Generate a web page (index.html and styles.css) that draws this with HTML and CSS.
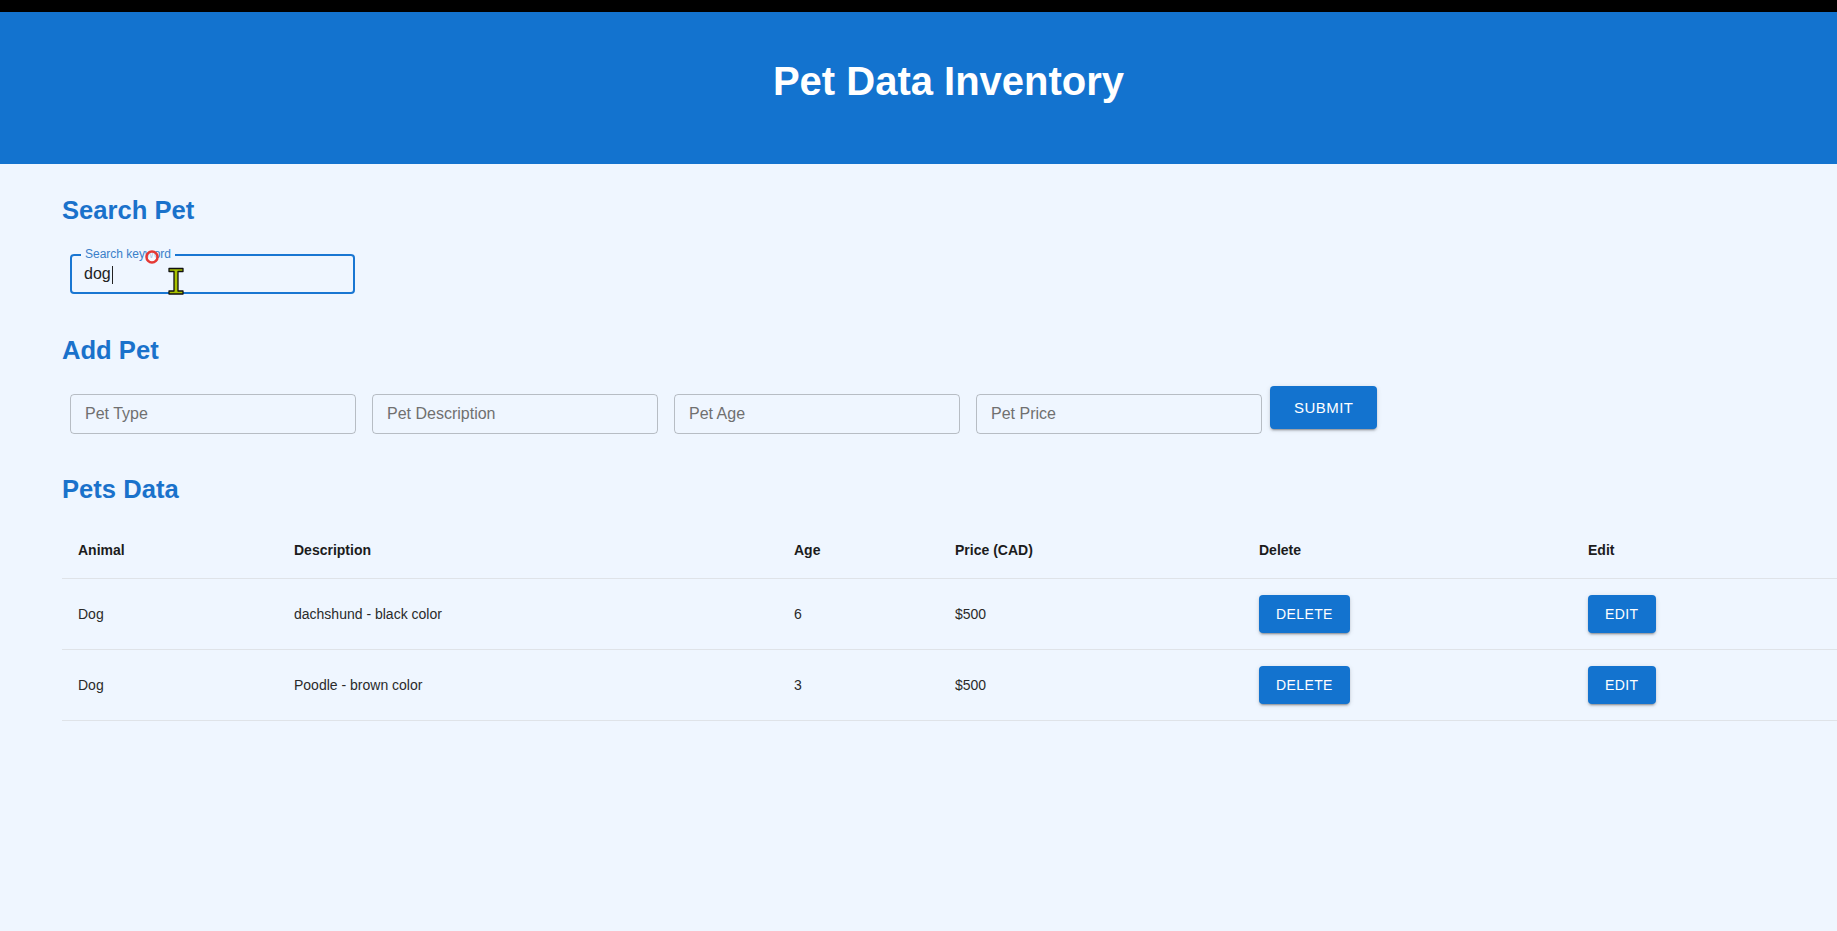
FILE: index.html
```html
<!DOCTYPE html>
<html lang="en">
<head>
<meta charset="utf-8">
<title>Pet Data Inventory</title>
<link rel="stylesheet" href="styles.css">
</head>
<body>
<div class="topbar"></div>
<header class="banner">
  <h1 class="title">Pet Data Inventory</h1>
</header>
<main class="content">
  <h2 class="section-title first">Search Pet</h2>
  <div class="search-row">
    <div class="search-field">
      <span class="float-label">Search keyword</span>
      <input class="search-input" type="text" value="dog">
      <span class="caret"></span>
      <svg class="click-ring" width="16" height="16" viewBox="0 0 16 16"><circle cx="8" cy="8" r="5.5" fill="#fff" fill-opacity="0.6" stroke="#e53935" stroke-width="2.5"/></svg>
      <svg class="ibeam" width="18" height="29" viewBox="0 0 18 29"><path d="M2 1.5h14v3h-5v19.5h5v3h-14v-3h5v-19.5h-5z" fill="#a9c200" stroke="#111" stroke-width="1.3" stroke-linejoin="round"/></svg>
    </div>
  </div>

  <h2 class="section-title">Add Pet</h2>
  <div class="add-row">
    <input class="text-field" type="text" placeholder="Pet Type">
    <input class="text-field" type="text" placeholder="Pet Description">
    <input class="text-field" type="text" placeholder="Pet Age">
    <input class="text-field" type="text" placeholder="Pet Price">
    <button class="btn btn-large" type="button">Submit</button>
  </div>

  <h2 class="section-title data-title">Pets Data</h2>
  <table class="pets-table">
    <colgroup>
      <col class="c-animal">
      <col class="c-desc">
      <col class="c-age">
      <col class="c-price">
      <col class="c-delete">
      <col class="c-edit">
    </colgroup>
    <thead>
      <tr>
        <th>Animal</th>
        <th>Description</th>
        <th>Age</th>
        <th>Price (CAD)</th>
        <th>Delete</th>
        <th>Edit</th>
      </tr>
    </thead>
    <tbody>
      <tr>
        <td>Dog</td>
        <td>dachshund - black color</td>
        <td>6</td>
        <td>$500</td>
        <td><button class="btn" type="button">Delete</button></td>
        <td><button class="btn" type="button">Edit</button></td>
      </tr>
      <tr>
        <td>Dog</td>
        <td>Poodle - brown color</td>
        <td>3</td>
        <td>$500</td>
        <td><button class="btn" type="button">Delete</button></td>
        <td><button class="btn" type="button">Edit</button></td>
      </tr>
    </tbody>
  </table>
</main>
</body>
</html>
```

FILE: styles.css
```css
* {
  box-sizing: border-box;
}

html, body {
  margin: 0;
  padding: 0;
}

body {
  background: #eff6ff;
  font-family: "Liberation Sans", Arial, sans-serif;
  color: rgba(0, 0, 0, 0.87);
}

.topbar {
  height: 12px;
  background: #000;
}

.banner {
  background: #1373cf;
  height: 152px;
  padding: 46px 0 0 60px;
}

.title {
  margin: 0;
  text-align: center;
  color: #fff;
  font-size: 40px;
  line-height: 46px;
  font-weight: 700;
}

.content {
  padding: 0 0 0 62px;
}

.section-title {
  margin: 33px 0 21px;
  font-size: 25.6px;
  line-height: 30px;
  font-weight: 700;
  color: #1a72cb;
}

.section-title.first {
  margin-top: 31px;
}

.section-title.data-title {
  margin: 32px 0 18px;
}

.search-row {
  display: flex;
}

.search-field {
  position: relative;
  margin: 8px;
  width: 285px;
  height: 40px;
  border: 2px solid #1976d2;
  border-radius: 4px;
  display: flex;
  align-items: center;
}

.float-label {
  position: absolute;
  top: -9px;
  left: 9px;
  padding: 0 4px;
  background: #eff6ff;
  font-size: 12px;
  line-height: 14px;
  color: #3a80c9;
}

.search-input {
  border: none;
  outline: none;
  background: transparent;
  font-family: inherit;
  font-size: 16px;
  color: #222;
  padding: 0 0 0 12px;
  width: 39px;
  height: 24px;
  flex: none;
}

.caret {
  width: 1px;
  height: 18px;
  background: #222;
  margin-left: 1px;
  margin-top: 2px;
}

.click-ring {
  position: absolute;
  left: 72px;
  top: -7px;
}

.ibeam {
  position: absolute;
  left: 95px;
  top: 11px;
}

.add-row {
  display: flex;
  align-items: flex-start;
}

.text-field {
  margin: 8px;
  width: 286px;
  height: 40px;
  border: 1px solid rgba(0, 0, 0, 0.23);
  border-radius: 4px;
  background: transparent;
  font-family: inherit;
  font-size: 16px;
  padding: 0 14px;
  color: #222;
  outline: none;
}

.text-field::placeholder {
  color: #707070;
  opacity: 1;
}

.btn {
  border: none;
  border-radius: 4px;
  background: #1373cf;
  color: #fff;
  font-family: inherit;
  font-size: 14px;
  line-height: 24px;
  letter-spacing: 0.4px;
  text-transform: uppercase;
  padding: 7px 17px;
  box-shadow: 0 3px 1px -2px rgba(0, 0, 0, 0.2), 0 2px 2px 0 rgba(0, 0, 0, 0.14), 0 1px 5px 0 rgba(0, 0, 0, 0.12);
  cursor: pointer;
}

.btn-large {
  font-size: 15px;
  line-height: 27px;
  letter-spacing: 0.46px;
  padding: 8px 24px;
}

.pets-table {
  width: 100%;
  table-layout: fixed;
  border-collapse: collapse;
}

.c-animal { width: 216px; }
.c-desc { width: 500px; }
.c-age { width: 161px; }
.c-price { width: 304px; }
.c-delete { width: 329px; }
.c-edit { width: 265px; }

.pets-table th,
.pets-table td {
  padding: 16px;
  text-align: left;
  vertical-align: middle;
  font-size: 14px;
  line-height: 24px;
  border-bottom: 1px solid #dfe3e8;
}

.pets-table th {
  font-weight: 700;
  color: #1c1c1c;
}

.pets-table td {
  color: #2a2a2a;
}
```
